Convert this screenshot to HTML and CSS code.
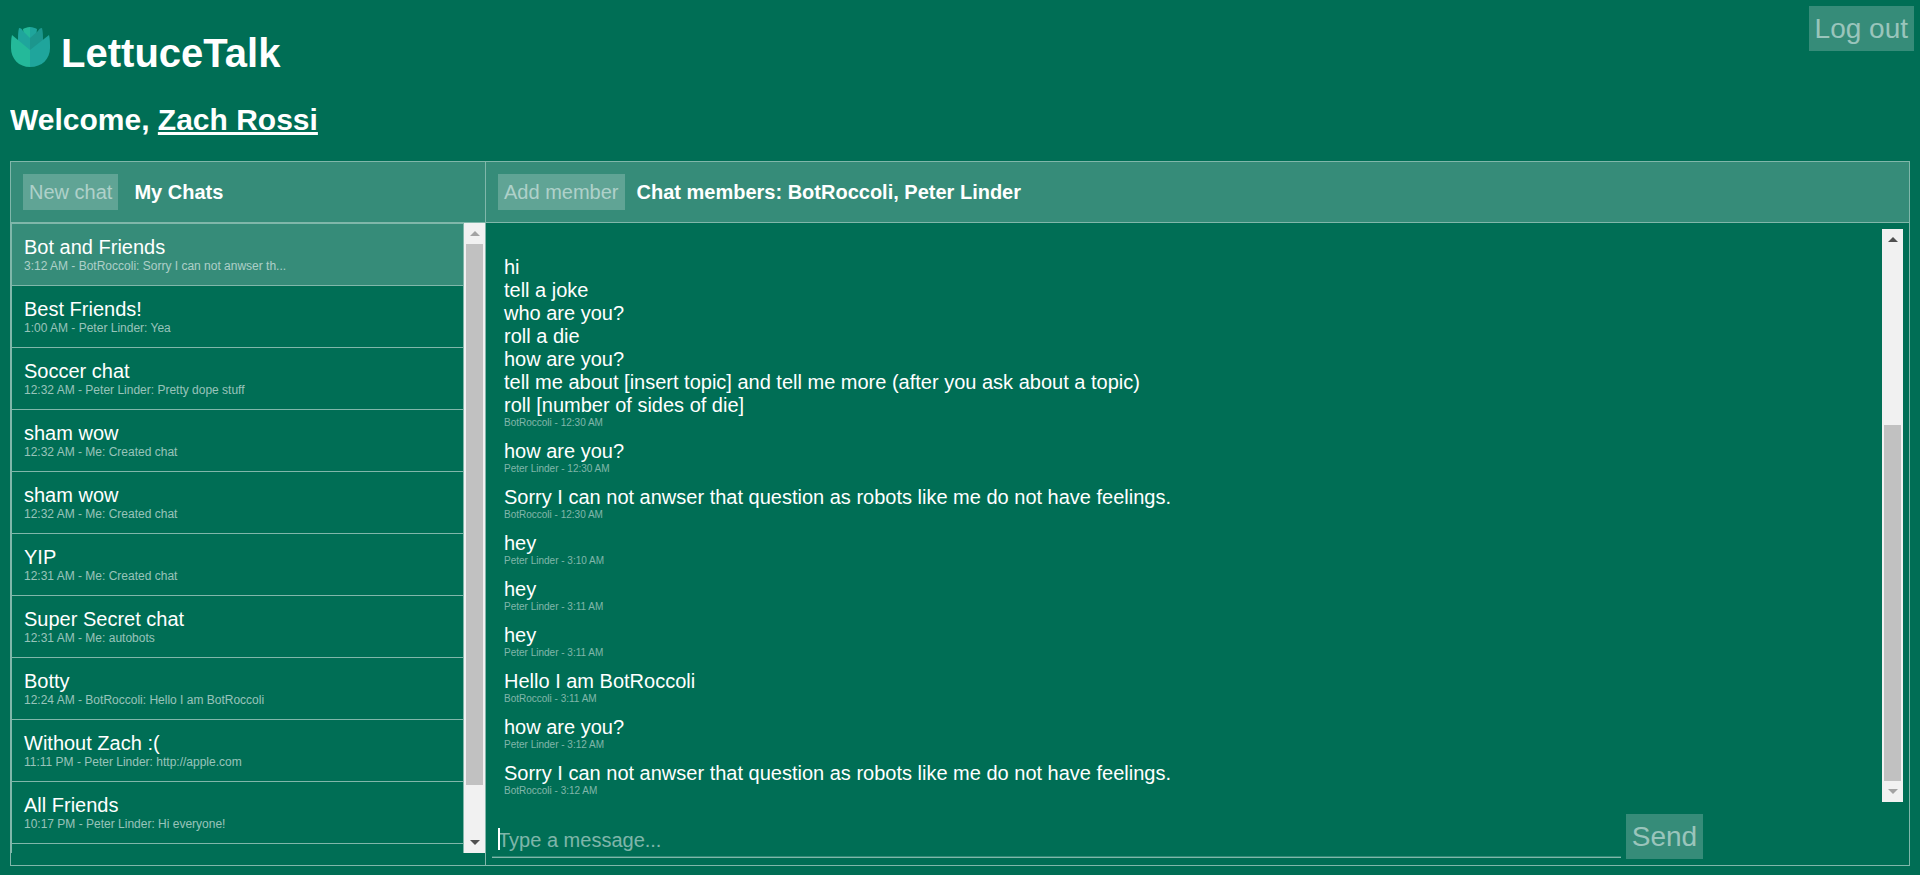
FILE: index.html
```html
<!DOCTYPE html>
<html lang="en">
<head>
    <meta charset="UTF-8">
    <meta name="viewport" content="width=device-width, initial-scale=1.0">
    <title>LettuceTalk</title>
    <link rel="stylesheet" href="styles.css">
</head>
<body>
    <button class="btn logout" type="button">Log out</button>

    <h1>
        <svg class="logo" viewBox="0 0 40 40" aria-hidden="true">
            <path fill="#24b99a" d="M20 0c-3 0-5 1-7 2l1 8 6 2h2z"/>
            <path fill="#1fa59c" d="M20 0c3 0 5 1 7 2l-1 8-6 2z"/>
            <path fill="#1fa59c" d="M9 1c2 0 3 1 4 3l7 7v14L8 14c0-5 0-9 1-13z"/>
            <path fill="#1c968d" d="M32 1c-2 0-3 1-4 3l-8 7v14l13-11c0-5 0-9-1-13z"/>
            <path fill="#24b99a" d="M2 8l18 15v17C9 40 1 32 1 21c0-5 0-9 1-13z"/>
            <path fill="#1fa59c" d="M39 8L20 23v17c12 0 20-8 20-19 0-5 0-9-1-13z"/>
        </svg>
        LettuceTalk
    </h1>
    <h2>Welcome, <a href="#">Zach Rossi</a></h2>

    <div class="panes">
        <div class="pane chats">
            <div class="pane-header">
                <button class="btn small" type="button">New chat</button>
                <strong>My Chats</strong>
            </div>
            <div class="chat-scroll">
                <div class="chat-list">
                    <div class="chat selected">Bot and Friends<small>3:12 AM - BotRoccoli: Sorry I can not anwser th...</small></div>
                    <div class="chat">Best Friends!<small>1:00 AM - Peter Linder: Yea</small></div>
                    <div class="chat">Soccer chat<small>12:32 AM - Peter Linder: Pretty dope stuff</small></div>
                    <div class="chat">sham wow<small>12:32 AM - Me: Created chat</small></div>
                    <div class="chat">sham wow<small>12:32 AM - Me: Created chat</small></div>
                    <div class="chat">YIP<small>12:31 AM - Me: Created chat</small></div>
                    <div class="chat">Super Secret chat<small>12:31 AM - Me: autobots</small></div>
                    <div class="chat">Botty<small>12:24 AM - BotRoccoli: Hello I am BotRoccoli</small></div>
                    <div class="chat">Without Zach :(<small>11:11 PM - Peter Linder: http://apple.com</small></div>
                    <div class="chat">All Friends<small>10:17 PM - Peter Linder: Hi everyone!</small></div>
                </div>
                <div class="scrollbar">
                    <span class="arrow up off"></span>
                    <div class="track at-top"><div class="thumb"></div></div>
                    <span class="arrow down"></span>
                </div>
            </div>
        </div>

        <div class="pane messages">
            <div class="pane-header">
                <button class="btn small" type="button">Add member</button>
                <strong>Chat members: BotRoccoli, Peter Linder</strong>
            </div>
            <div class="message-scroll">
                <div class="message-list">
                    <div class="message">hi<br>tell a joke<br>who are you?<br>roll a die<br>how are you?<br>tell me about [insert topic] and tell me more (after you ask about a topic)<br>roll [number of sides of die]<small>BotRoccoli - 12:30 AM</small></div>
                    <div class="message">how are you?<small>Peter Linder - 12:30 AM</small></div>
                    <div class="message">Sorry I can not anwser that question as robots like me do not have feelings.<small>BotRoccoli - 12:30 AM</small></div>
                    <div class="message">hey<small>Peter Linder - 3:10 AM</small></div>
                    <div class="message">hey<small>Peter Linder - 3:11 AM</small></div>
                    <div class="message">hey<small>Peter Linder - 3:11 AM</small></div>
                    <div class="message">Hello I am BotRoccoli<small>BotRoccoli - 3:11 AM</small></div>
                    <div class="message">how are you?<small>Peter Linder - 3:12 AM</small></div>
                    <div class="message">Sorry I can not anwser that question as robots like me do not have feelings.<small>BotRoccoli - 3:12 AM</small></div>
                </div>
                <div class="scrollbar">
                    <span class="arrow up"></span>
                    <div class="track at-bottom"><div class="thumb"></div></div>
                    <span class="arrow down off"></span>
                </div>
            </div>
            <form class="composer">
                <input type="text" placeholder="Type a message..." aria-label="Message">
                <button class="btn" type="button">Send</button>
            </form>
        </div>
    </div>
</body>
</html>
```

FILE: styles.css
```css
* { box-sizing: border-box; }
body {
    margin: 0 10px; background: #006e55; color: white;
    font-family: Arial, "Liberation Sans", sans-serif; font-size: 20px; line-height: 23px;
}
h1 { margin: 27px 0 25px; font-size: 40px; line-height: 49px; }
h2 { margin: 0 0 24px; font-size: 30px; line-height: 34px; }
h2 a { color: white; }
.logo { width: 40px; height: 40px; }

.btn {
    border: 0; padding: 6px; background: rgba(255, 255, 255, 0.21);
    color: rgba(255, 255, 255, 0.5); font-family: inherit;
    font-size: 28px; line-height: 33px; cursor: pointer;
}
.btn.small { font-size: 20px; line-height: 24px; }
.logout { position: absolute; top: 6px; right: 6px; }

.panes { display: flex; height: calc(100vh - 170px); min-height: 400px; }
.pane { display: flex; flex-direction: column; border: 1px solid rgba(255, 255, 255, 0.5); }
.chats { width: 25%; border-right: 0; }
.messages { flex: 1; }
.pane-header {
    display: flex; align-items: center; gap: 16px; padding: 12px;
    background: rgba(255, 255, 255, 0.21); background-clip: padding-box;
    border-bottom: 1px solid rgba(255, 255, 255, 0.5);
}
.messages .pane-header { gap: 12px; }

.chat-scroll { display: flex; flex: 1; min-height: 0; margin-bottom: 12px; }
.chat-list {
    flex: 1; overflow: hidden;
    border: 1px solid rgba(255, 255, 255, 0.5); border-bottom: 0;
}
.chat { padding: 12px; border-bottom: 1px solid rgba(255, 255, 255, 0.5); cursor: pointer; }
.chat small { display: block; font-size: 12px; line-height: 14px; color: rgba(255, 255, 255, 0.6); }
.selected { background: rgba(255, 255, 255, 0.21); background-clip: padding-box; }

.message-scroll { display: flex; flex: 1; min-height: 0; margin: 6px; margin-bottom: 12px; }
.message-list {
    display: flex; flex-direction: column; justify-content: flex-end;
    flex: 1; overflow: hidden;
}
.message { padding: 6px 12px; }
.message small { display: block; font-size: 10px; line-height: 11px; color: rgba(255, 255, 255, 0.5); }

.composer { display: flex; align-items: flex-start; gap: 5px; margin: 0 6px 6px; }
.composer input {
    width: 80%; height: 44px; padding: 14px 6px 4px; border: 0;
    border-bottom: 1px solid rgba(255, 255, 255, 0.5);
    box-shadow: inset 0 -1px rgba(255, 255, 255, 0.2);
    /* text cursor */
    background: linear-gradient(white, white) 6px 14px / 2px 22px no-repeat;
    color: white; font-family: inherit; font-size: 20px; outline: none;
}
.composer input::placeholder { color: rgba(255, 255, 255, 0.5); }

.scrollbar { display: flex; flex-direction: column; width: 21px; background: #f1f1f1; }
.arrow { display: flex; align-items: center; justify-content: center; height: 21px; }
.arrow::before { content: ""; border: 5px solid transparent; }
.up::before { border-top: 0; border-bottom-color: #505050; }
.down::before { border-bottom: 0; border-top-color: #505050; }
.up.off::before { border-bottom-color: #a3a3a3; }
.down.off::before { border-top-color: #a3a3a3; }
.track { display: flex; flex-direction: column; flex: 1; padding: 0 2px; }
.thumb { background: #c1c1c1; }
.at-top .thumb { height: 92%; }
.at-bottom { justify-content: flex-end; }
.at-bottom .thumb { height: 67%; }
```
